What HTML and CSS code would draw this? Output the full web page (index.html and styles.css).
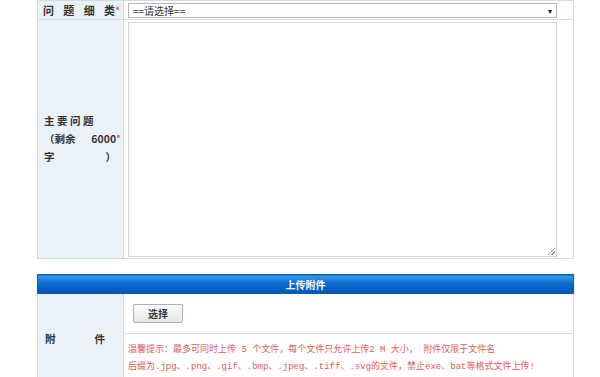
FILE: index.html
```html
<!DOCTYPE html>
<html lang="zh">
<head>
<meta charset="utf-8">
<link rel="stylesheet" href="styles.css">
</head>
<body>
<div class="page">
  <table class="form">
    <colgroup><col class="c1"><col></colgroup>
    <tr class="row-select">
      <th class="label"><span class="just">问题细类</span><span class="req">*</span></th>
      <td class="field">
        <div class="select"><span>==请选择==</span><span class="arrow">▾</span></div>
      </td>
    </tr>
    <tr class="row-text">
      <th class="label">
        <div class="multi">
          <div class="spread">主要问题</div>
          <div class="line2"><span>（剩余</span><span>6000<span class="req">*</span></span></div>
          <div class="line3"><span>字</span><span>）</span></div>
        </div>
      </th>
      <td class="field">
        <div class="textarea"><span class="grip"></span></div>
      </td>
    </tr>
  </table>

  <table class="form upload">
    <colgroup><col class="c1"><col></colgroup>
    <tr>
      <th class="head" colspan="2">上传附件</th>
    </tr>
    <tr class="row-btn">
      <th class="label" rowspan="2"><div class="att"><span>附</span><span>件</span></div></th>
      <td class="field"><button class="btn">选择</button></td>
    </tr>
    <tr class="row-tip">
      <td class="field tip">
        <p>温馨提示：最多可同时上传 5 个文件，每个文件只允许上传2 M 大小， 附件仅限于文件名</p>
        <p>后缀为.jpg、.png、.gif、.bmp、.jpeg、.tiff、.svg的文件，禁止exe、bat等格式文件上传!</p>
      </td>
    </tr>
  </table>
</div>
</body>
</html>
```

FILE: styles.css
```css
html, body {
  margin: 0;
  padding: 0;
  background: #ffffff;
}
body {
  font-family: "Noto Sans CJK SC", "DejaVu Sans", sans-serif;
  font-size: 11px;
  color: #333;
}
.page {
  padding: 0 26px 0 37px;
}
.form {
  width: 537px;
  border-collapse: collapse;
  table-layout: fixed;
}
.c1 {
  width: 86px;
}
.form th, .form td {
  border: 1px solid #cfdde8;
  padding: 0;
}
.label {
  background: #eaf2f8;
  font-weight: bold;
  color: #333;
  text-align: left;
}
.row-select {
  height: 19px;
}
.row-select .label {
  padding: 0 2px 0 5px;
}
.just {
  display: inline-block;
  width: 72px;
  text-align-last: justify;
}
.req {
  color: #e03030;
  font-weight: normal;
}
.field {
  padding: 0 16px 0 4px !important;
  vertical-align: middle;
}
.select {
  height: 13px;
  border: 1px solid #b8b8b8;
  display: flex;
  justify-content: space-between;
  align-items: center;
  padding: 0 4px;
  font-size: 10px;
  line-height: 13px;
  color: #333;
  background: #fff;
}
.arrow {
  font-size: 8px;
  color: #222;
}
.row-text {
  height: 239px;
}
.multi {
  padding: 0 2px 0 6px;
  line-height: 18px;
  font-size: 10.5px;
}
.spread {
  letter-spacing: 2.5px;
}
.line2, .line3 {
  display: flex;
  justify-content: space-between;
}
.line3 {
  padding-right: 5px;
}
.textarea {
  height: 233px;
  border: 1px solid #d4d4d4;
  position: relative;
  background: #fff;
}
.grip {
  position: absolute;
  right: 1px;
  bottom: 1px;
  width: 7px;
  height: 7px;
  background: linear-gradient(135deg, transparent 45%, #999 45%, #999 55%, transparent 55%, transparent 70%, #999 70%, #999 80%, transparent 80%);
}
.upload {
  margin-top: 15px;
}
.head {
  height: 18px;
  background: linear-gradient(#3a9ae8 0%, #0a6cd0 45%, #0556b8 100%);
  color: #fff;
  font-weight: bold;
  font-size: 10px;
  text-align: center;
  border-color: #0a5cb8 !important;
}
.row-btn {
  height: 40px;
}
.btn {
  width: 50px;
  height: 19px;
  margin-left: 5px;
  border: 1px solid #a8b0b8;
  border-radius: 2px;
  background: linear-gradient(#fbfbfb, #e4e6ea);
  font-family: inherit;
  font-size: 10px;
  font-weight: bold;
  color: #333;
  padding: 0;
}
.att {
  display: flex;
  justify-content: space-between;
  padding: 0 18px 0 7px;
  font-size: 10.5px;
}
.row-btn .label {
  vertical-align: top;
  padding-top: 37px;
}
.tip {
  vertical-align: top;
  padding-top: 8px !important;
  height: 36px;
}
.tip p {
  margin: 0;
  color: #e25a5a;
  font-family: "Liberation Mono", "Noto Sans CJK SC", monospace;
  font-size: 9px;
  line-height: 17px;
  white-space: nowrap;
}
```
